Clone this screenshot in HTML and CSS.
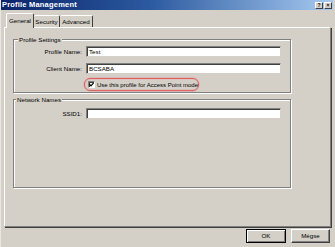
FILE: index.html
```html
<!DOCTYPE html>
<html>
<head>
<meta charset="utf-8">
<link rel="stylesheet" href="styles.css">
</head>
<body>
<div class="window">
  <div class="titlebar">
    <span class="title">Profile Management</span>
    <div class="ctrls">
      <span class="cbtn">?</span>
      <span class="cbtn">×</span>
    </div>
  </div>
  <div class="tabs">
    <span class="tab tab-active tab-general">General</span>
    <span class="tab tab-security">Security</span>
    <span class="tab tab-advanced">Advanced</span>
  </div>
  <div class="panel">
    <div class="group group-profile">
      <div class="group-title">Profile Settings</div>
      <div class="row row-first">
        <span class="label">Profile Name:</span>
        <span class="field">Test</span>
      </div>
      <div class="row row-second">
        <span class="label">Client Name:</span>
        <span class="field">BCSABA</span>
      </div>
      <div class="row row-check">
        <span class="label"></span>
        <span class="oval">
          <span class="checkbox">
            <svg width="5" height="5" viewBox="0 0 5 5"><path d="M0.5 2.2 L2 3.8 L4.6 0.8" fill="none" stroke="#000" stroke-width="1.2"/></svg>
          </span>
          <span class="check-label">Use this profile for Access Point mode</span>
        </span>
      </div>
    </div>
    <div class="group group-network">
      <div class="group-title">Network Names</div>
      <div class="row row-ssid">
        <span class="label">SSID1:</span>
        <span class="field"></span>
      </div>
    </div>
  </div>
  <div class="buttons">
    <span class="btn btn-default">OK</span>
    <span class="btn">Mégse</span>
  </div>
</div>
</body>
</html>
```
FILE: styles.css
```css
html, body {
  margin: 0;
  padding: 0;
  background: #d4d0c8;
}
.window {
  width: 335px;
  height: 247px;
  background: #d4d0c8;
  font-family: "Liberation Sans", Arial, sans-serif;
  font-size: 6.2px;
  color: #000;
  display: flex;
  flex-direction: column;
  box-sizing: border-box;
  border-left: 1px solid #e8e6e0;
  overflow: hidden;
}
.titlebar {
  height: 10px;
  margin-right: 2px;
  display: flex;
  align-items: center;
  justify-content: space-between;
  padding: 0 1px 0 1px;
  background: linear-gradient(to right, #0a246a 0%, #2c5aa0 45%, #a6caf0 100%);
}
.title {
  color: #fff;
  font-weight: bold;
  font-size: 7.5px;
  letter-spacing: 0.2px;
  line-height: 10px;
}
.ctrls {
  display: flex;
  gap: 1px;
}
.cbtn {
  width: 8px;
  height: 7px;
  box-sizing: border-box;
  background: #d4d0c8;
  border-top: 1px solid #fff;
  border-left: 1px solid #fff;
  border-right: 1px solid #404040;
  border-bottom: 1px solid #404040;
  font-size: 5px;
  font-weight: bold;
  line-height: 5px;
  text-align: center;
}
.tabs {
  margin-top: 3px;
  margin-left: 5px;
  height: 14px;
  display: flex;
  align-items: flex-end;
  position: relative;
  z-index: 1;
}
.tab {
  box-sizing: border-box;
  height: 12px;
  line-height: 11px;
  text-align: center;
  border-top: 1px solid #fff;
  border-left: 1px solid #fff;
  border-right: 1px solid #404040;
  border-top-left-radius: 2px;
  border-top-right-radius: 2px;
  background: #d4d0c8;
}
.tab-active {
  height: 15px;
  margin-bottom: -1px;
  line-height: 13px;
}
.tab-general { width: 28px; }
.tab-security { width: 26px; border-left: none; }
.tab-advanced { width: 33px; border-left: none; }
.panel {
  box-sizing: border-box;
  margin-left: 3px;
  width: 327px;
  height: 200px;
  border-top: 1px solid #fff;
  border-left: 1px solid #fff;
  border-right: 1px solid #808080;
  border-bottom: 1px solid #808080;
  box-shadow: 1px 1px 0 #404040;
  display: flex;
  flex-direction: column;
}
.group {
  box-sizing: border-box;
  margin-left: 8px;
  width: 278px;
  border: 1px solid #808080;
  box-shadow: 1px 1px 0 #fff, inset 1px 1px 0 #fff;
}
.group-profile {
  margin-top: 11px;
  height: 54px;
}
.group-network {
  margin-top: 6px;
  height: 89px;
}
.group-title {
  margin-top: -4px;
  margin-left: 4px;
  padding: 0 1px;
  width: fit-content;
  height: 7px;
  line-height: 7px;
  background: #d4d0c8;
}
.group-network .group-title {
  margin-left: 2px;
}
.row {
  display: grid;
  grid-template-columns: 68px 195px;
  column-gap: 4px;
  align-items: center;
}
.row-first { margin-top: 3px; }
.row-second { margin-top: 6px; }
.row-check { margin-top: 4px; }
.row-ssid { margin-top: 5px; }
.label {
  text-align: right;
  line-height: 11px;
}
.field {
  box-sizing: border-box;
  height: 11px;
  background: #fff;
  border-top: 1px solid #808080;
  border-left: 1px solid #808080;
  border-right: 1px solid #d4d0c8;
  border-bottom: 1px solid #d4d0c8;
  box-shadow: inset 1px 1px 0 #404040;
  padding-left: 2px;
  line-height: 9px;
}
.oval {
  margin-left: -2px;
  width: 115px;
  height: 13px;
  box-sizing: border-box;
  border: 1px solid #d9625f;
  border-radius: 6px;
  box-shadow: 0 0 0 0.5px #e8a0a0, inset 0 0 0 0.5px #e8b0b0;
  display: flex;
  align-items: center;
  padding-left: 3px;
  gap: 2px;
  font-size: 6px;
}
.checkbox {
  box-sizing: border-box;
  width: 7px;
  height: 7px;
  background: #fff;
  border-top: 1px solid #808080;
  border-left: 1px solid #808080;
  border-right: 1px solid #fff;
  border-bottom: 1px solid #fff;
  box-shadow: inset 1px 1px 0 #404040;
  display: flex;
  align-items: center;
  justify-content: center;
}
.checkbox svg {
  display: block;
}
.check-label {
  white-space: nowrap;
}
.buttons {
  margin-top: 2px;
  display: flex;
  justify-content: flex-end;
  gap: 5px;
  padding-right: 5px;
}
.btn {
  box-sizing: border-box;
  width: 39px;
  height: 14px;
  line-height: 11px;
  text-align: center;
  background: #d4d0c8;
  border-top: 1px solid #fff;
  border-left: 1px solid #fff;
  border-right: 1px solid #404040;
  border-bottom: 1px solid #404040;
  box-shadow: inset -1px -1px 0 #808080;
}
.btn-default {
  width: 40px;
  border: 1px solid #000;
  box-shadow: inset 1px 1px 0 #fff, inset -1px -1px 0 #808080;
}
```
